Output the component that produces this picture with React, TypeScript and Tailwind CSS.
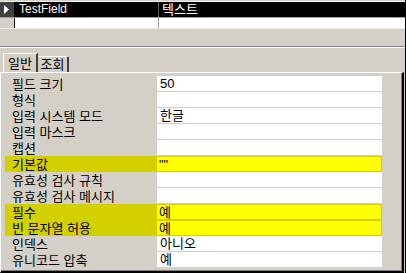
import React from "react";

const rows: { label: string; value: string; hl?: boolean }[] = [
  { label: "필드 크기", value: "50" },
  { label: "형식", value: "" },
  { label: "입력 시스템 모드", value: "한글" },
  { label: "입력 마스크", value: "" },
  { label: "캡션", value: "" },
  { label: "기본값", value: '""', hl: true },
  { label: "유효성 검사 규칙", value: "" },
  { label: "유효성 검사 메시지", value: "" },
  { label: "필수", value: "예", hl: true },
  { label: "빈 문자열 허용", value: "예", hl: true },
  { label: "인덱스", value: "아니오" },
  { label: "유니코드 압축", value: "예" },
];

export default function App() {
  return (
    <div
      className="w-[406px] h-[273px] bg-[#d4d0c8] flex flex-col overflow-hidden text-[13px] leading-[15px] text-black"
      style={{ fontFamily: '"Liberation Sans", "Noto Sans CJK KR", sans-serif' }}
    >
      {/* top grid */}
      <div className="flex flex-col border-r border-black">
        <div className="h-[1px] bg-[#d4d0c8]" />
        <div className="h-[1px] bg-[#f4f2ee]" />
        <div className="flex h-[15px] bg-black">
          <div className="w-[14px] bg-[#404040] flex items-center justify-center">
            <svg width="6" height="9" viewBox="0 0 6 9">
              <path d="M0 0 L5 4.5 L0 9 Z" fill="#fff" />
            </svg>
          </div>
          <div className="w-[1px] bg-black" />
          <div className="w-[143px] text-white pl-[4px] leading-[15px] text-[12px]">TestField</div>
          <div className="w-[1px] bg-[#606060]" />
          <div className="flex-1 text-white pl-[3px] leading-[15px]">텍스트</div>
        </div>
        <div className="h-[1px] bg-[#a0a0a0]" />
        <div className="flex h-[10px] bg-white">
          <div className="w-[14px] bg-[#d4d0c8]" />
          <div className="w-[1px] bg-black" />
          <div className="w-[143px]" />
          <div className="w-[1px] bg-[#a0a0a0]" />
          <div className="flex-1" />
        </div>
        <div className="h-[1px] bg-[#ece9e2]" />
        <div className="h-[17px]" />
        <div className="h-[1px] bg-[#808080]" />
        <div className="h-[1px] bg-white" />
        <div className="h-[5px]" />
      </div>

      {/* tabs */}
      <div className="flex pl-[3px] items-end h-[19px] border-r border-black relative z-10">
        <div className="w-[35px] h-[19px] bg-[#d4d0c8] border-l border-t border-white border-r-2 border-r-[#404040] rounded-tl-[2px] flex justify-center pt-[3px] leading-[14px] text-[13px]">
          일반
        </div>
        <div className="w-[31px] h-[16px] border-t border-white border-r-2 border-r-[#404040] rounded-tr-[2px] flex justify-center pt-[1px] leading-[14px] text-[13px]">
          조회
        </div>
      </div>

      {/* panel */}
      <div className="flex-1 flex border-r border-black">
        <div className="flex-1 flex flex-col border-t border-white border-l border-l-white border-r-2 border-r-black border-b-2 border-b-black mr-[1px]">
          <div className="flex-1 flex flex-col border-r border-[#808080] border-b border-b-[#808080] pl-[4px] pt-[3px]">
            {rows.map((r, i) => (
              <div key={i} className="flex h-[16px]">
                <div
                  className={
                    "w-[152px] pl-[7px] leading-[17px] " + (r.hl ? "bg-[#d4d000]" : "")
                  }
                >
                  {r.label}
                </div>
                {r.hl ? (
                  <div className="w-[225px] bg-[#ffff00] border-y border-r border-[#d4d000] pl-[2px] leading-[15px]">
                    {r.value}
                  </div>
                ) : (
                  <div className="w-[225px] h-[15px] bg-white pl-[3px] leading-[16px]">{r.value}</div>
                )}
              </div>
            ))}
          </div>
        </div>
      </div>
    </div>
  );
}
